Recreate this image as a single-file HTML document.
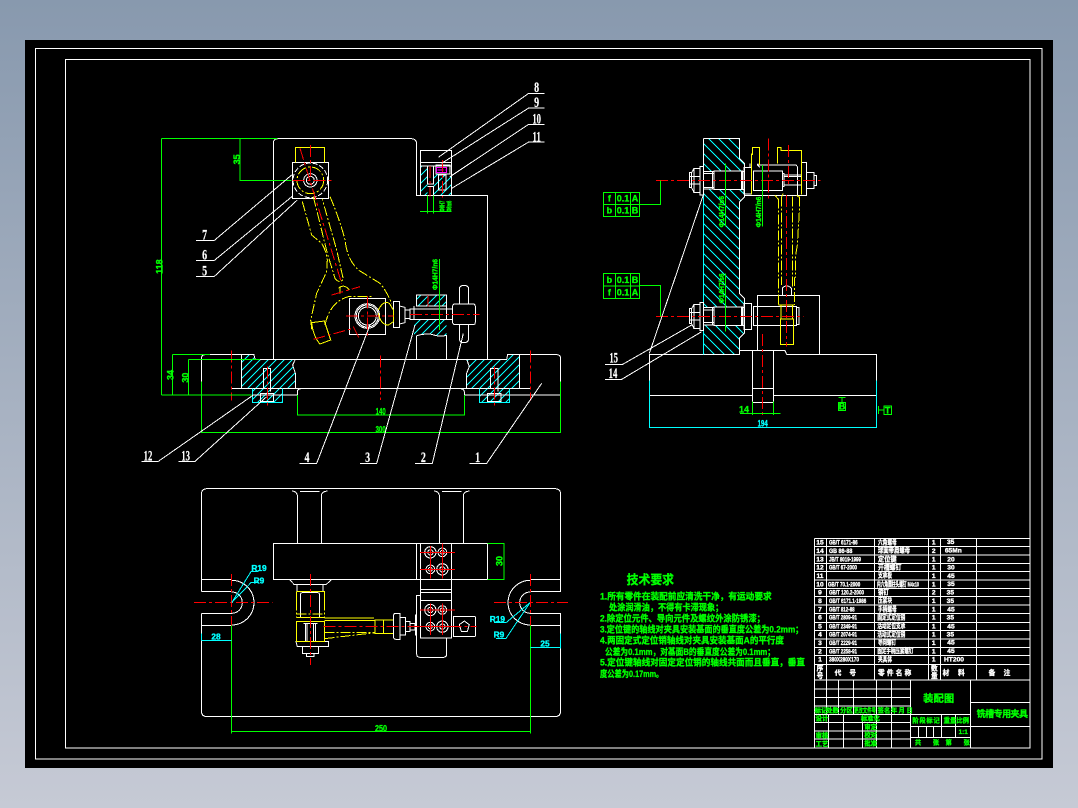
<!DOCTYPE html>
<html><head><meta charset="utf-8"><style>
html,body{margin:0;padding:0;width:1078px;height:808px;overflow:hidden;background:linear-gradient(180deg,#8899ae 0%,#c6cad5 100%)}
svg{position:absolute;left:0;top:0;display:block}
svg *{vector-effect:non-scaling-stroke}
.w{stroke:#fff;fill:none;stroke-width:1}
.g{stroke:#0f0;fill:none;stroke-width:1}
.c{stroke:#0ff;fill:none;stroke-width:1}
.r{stroke:#f00;fill:none;stroke-width:1;stroke-dasharray:12 3 3 3}
.r2{stroke:#f00;fill:none;stroke-width:1}
.y{stroke:#ff0;fill:none;stroke-width:1}
.yd{stroke:#ff0;fill:none;stroke-width:1;stroke-dasharray:10 2 2 2}
text{font-family:"Liberation Sans","Noto Sans CJK SC",sans-serif;font-weight:700;stroke-width:.35}
.tw{fill:#fff;stroke:#fff}.tg{fill:#0f0;stroke:#0f0}.tc{fill:#0ff;stroke:#0ff}
.m{text-anchor:middle}
.l{font-family:"Liberation Serif",serif;font-size:44px;stroke-width:.2}
</style></head><body>
<svg width="1078" height="808" viewBox="0 0 1078 808" shape-rendering="crispEdges">
<defs>
<pattern id="hf" patternUnits="userSpaceOnUse" width="24" height="24"><path d="M-6 6L6 -6M0 24L24 0M18 30L30 18" stroke="#0ff" stroke-width="2.4" fill="none"/></pattern>
<pattern id="hb" patternUnits="userSpaceOnUse" width="30" height="30"><path d="M-6 24L6 36M0 0L30 30M24 -6L36 6" stroke="#0ff" stroke-width="2.6" fill="none"/></pattern>
</defs>
<rect x="25" y="40" width="1028" height="728" fill="#000"/>
<rect x="35.5" y="48.5" width="1006.5" height="710.5" class="w"/>
<rect x="65.5" y="59.5" width="964.5" height="688.5" class="w"/>

<!-- FRONT VIEW -->
<g transform="translate(140 80) scale(.33333)">
<path d="M304 824H342V838H304ZM304 838H466L458 855L466 880V925H304ZM338 925H428V968H338ZM1103 824H1138V838H1103ZM980 838H1138V925H980V880L988 860ZM1018 925H1108V968H1018Z" fill="url(#hf)"/>
<path d="M829 645H920V678H829ZM822 718H920V768Q898 772 875 763Q850 760 829 768H822Z" fill="url(#hf)"/>
<path d="M842 258H862V346H842ZM880 280H935V346H880Z" fill="url(#hf)"/>
<rect x="862" y="258" width="18" height="88" fill="#000"/>
<path class="w" d="M400 838V190Q400 176 414 176H812Q830 176 830 192V346H1043V838"/>
<path class="w" d="M184 905V836Q184 824 196 824H342L345 838H1100L1103 824H1250Q1262 824 1262 836V905"/>
<path class="w" d="M184 945H335M428 945H472M973 945H1018M1108 945H1262M275 925H1170"/>
<path class="w" d="M472 945V936Q472 927 482 927M973 945V936Q973 927 963 927M466 838L458 855L466 880V925M980 838L988 860L980 880V925M304 824V925M1138 824V925"/>
<path class="c" d="M338 925V968H428V925M1018 925V968H1108V925"/>
<path class="w" d="M370 925V865H392V935M362 940H400V965H362ZM1052 925V865H1074V935M1043 940H1083V965H1043ZM338 945H428M1018 945H1108"/>
<!-- upper clamp -->
<path class="w" d="M841 346V212H935V346M841 247H935M841 258H935M888 255H930V282H888ZM896 285H918V330H896ZM862 258V312H880V258M862 320H880V346M896 330H918"/>
<rect x="890" y="262" width="30" height="16" stroke="#f0f" fill="none"/>
<path d="M892 270H918" stroke="#f0f" stroke-dasharray="6 2"/>
<!-- squares and circles -->
<rect x="457" y="247" width="109" height="108" class="w"/>
<circle cx="511" cy="301" r="12" class="w"/><circle cx="511" cy="301" r="20" class="w"/><circle cx="511" cy="301" r="52" class="w" stroke-dasharray="5 2"/>
<rect x="628" y="655" width="109" height="109" class="w"/>
<circle cx="682" cy="708" r="27" class="w"/><circle cx="682" cy="708" r="33" class="w"/><circle cx="682" cy="708" r="37" class="w"/>
<!-- handle side -->
<path class="w" d="M760 665H778V742H760ZM778 678L795 682V728L778 732M795 690H810V716H795M810 687H938V718H810ZM938 678Q938 672 945 672H1000Q1006 672 1006 680V726Q1006 734 1000 734H945Q938 734 938 726ZM958 672V628Q958 616 972 616Q986 616 986 628V672M958 734V775Q958 788 972 788Q986 788 986 775V734"/>
<path class="w" d="M829 838V768Q850 760 875 763Q898 772 920 766V838M829 645H920V678H829ZM822 678V718H832M920 678V718"/>
<!-- link yellow -->
<path class="yd" d="M487 365L515 465L545 490Q558 510 562 540L560 575L530 640L512 720L516 752M570 350Q600 420 615 480Q622 540 655 570L720 610Q738 630 755 670"/>
<path class="yd" d="M520 350L562 520L585 595Q598 612 610 598L590 510L547 358"/>
<path class="y" d="M515 728L553 723L572 780L540 792Q520 770 515 728ZM466 247V203H553V247M595 625Q612 610 628 630M600 620V640M715 690Q730 660 748 670L760 690V725L745 735Q722 735 715 700"/>
<circle cx="511" cy="301" r="40" class="yd"/>
<path class="yd" d="M555 735Q570 665 625 650H700"/>
<!-- centerlines -->
<path class="r" d="M275 812V962M722 826V960M1171 812V962M382 860V980M1063 860V980M458 301H578M511 195V290M480 205L605 610M618 708H760M682 650V772M810 703H1018M870 258V350M907 240V352M864 645V680M520 778L640 745M575 645L660 620M640 740L660 780"/>
<!-- green dims -->
<path class="g" d="M65 176H412M65 176V945M65 945H335M300 176V301H455M98 823H210M98 823V945M145 838H360M145 838V945M472 945V1005H973V945M184 905V1058H1262V905M840 395H935M862 346V400M880 346V400M898 537V750"/>
<text class="tg m" font-size="27" transform="translate(300 238) rotate(-90)">35</text>
<text class="tg m" font-size="27" transform="translate(68 560) rotate(-90)">118</text>
<text class="tg m" font-size="27" transform="translate(100 885) rotate(-90)">34</text>
<text class="tg m" font-size="27" transform="translate(145 893) rotate(-90)">30</text>
<text class="tg m" font-size="27" x="722" y="1004" textLength="30" lengthAdjust="spacingAndGlyphs">140</text>
<text class="tg m" font-size="27" x="722" y="1057" textLength="30" lengthAdjust="spacingAndGlyphs">300</text>
<text class="tg" font-size="21" transform="translate(914 395) rotate(-90)" textLength="33" lengthAdjust="spacingAndGlyphs">Φ8H7</text>
<text class="tg" font-size="21" transform="translate(935 395) rotate(-90)" textLength="33" lengthAdjust="spacingAndGlyphs">Φ8m6</text>
<text class="tg" font-size="22" transform="translate(893 630) rotate(-90)" textLength="93" lengthAdjust="spacingAndGlyphs">Φ14H7/n6</text>
<!-- leaders -->
<path class="w" d="M1214 40H1166L895 232M1214 84H1166L905 250M1214 133H1166L930 290M1214 186H1166L935 325M168 482H222L455 285M168 542H222L458 348M168 590H222L472 360M5 1144H55L340 945M115 1144H165L380 950M478 1150H530L690 735M660 1150H710L825 735M825 1150H877L970 760M988 1150H1040L1205 910"/>
<text class="tw l m" x="1190" y="36" textLength="15" lengthAdjust="spacingAndGlyphs">8</text><text class="tw l m" x="1190" y="81" textLength="15" lengthAdjust="spacingAndGlyphs">9</text><text class="tw l m" x="1190" y="130" textLength="26" lengthAdjust="spacingAndGlyphs">10</text><text class="tw l m" x="1190" y="184" textLength="26" lengthAdjust="spacingAndGlyphs">11</text>
<text class="tw l m" x="194" y="478" textLength="15" lengthAdjust="spacingAndGlyphs">7</text><text class="tw l m" x="194" y="538" textLength="15" lengthAdjust="spacingAndGlyphs">6</text><text class="tw l m" x="194" y="586" textLength="15" lengthAdjust="spacingAndGlyphs">5</text>
<text class="tw l m" x="24" y="1141" textLength="26" lengthAdjust="spacingAndGlyphs">12</text><text class="tw l m" x="137" y="1141" textLength="26" lengthAdjust="spacingAndGlyphs">13</text><text class="tw l m" x="501" y="1146" textLength="15" lengthAdjust="spacingAndGlyphs">4</text><text class="tw l m" x="683" y="1146" textLength="15" lengthAdjust="spacingAndGlyphs">3</text><text class="tw l m" x="850" y="1146" textLength="15" lengthAdjust="spacingAndGlyphs">2</text><text class="tw l m" x="1013" y="1146" textLength="15" lengthAdjust="spacingAndGlyphs">1</text>
</g>

<!-- RIGHT VIEW -->
<g transform="translate(590 120) scale(.33333)">
<path d="M340 55H448V115L463 130V232L448 247V520L463 535V640L448 655V703H340Z" fill="url(#hb)"/>
<rect x="340" y="153" width="122" height="56" fill="#000"/><rect x="340" y="561" width="122" height="56" fill="#000"/>
<path class="w" d="M340 55H448V115L463 130V232L448 247V520L463 535V640L448 655V703H335M340 55V225"/>
<path class="c" d="M340 225V703"/>
<path class="w" d="M178 782V703H335M448 692H585L590 703H860V782M178 826H487M550 826H860M487 692V880M550 692V880M487 805H550M487 847H550M502 692V526H689V703"/>
<path class="c" d="M178 782V922H860V782"/>
<!-- upper bolt -->
<path class="w" d="M330 140H340V225H330ZM330 145H312L305 158H298V203H305L312 218H330M305 158V203M312 145V218M298 170H330M298 192H330M340 155H372M340 207H372M340 160H372M340 202H372M372 153H458V209H372ZM368 153V209M454 155H462V208H454ZM462 142H485V222H462ZM490 153H578V212H490ZM578 160H582V200H578M582 165H635M582 195H635M582 170H635M462 226H650V127H635M502 135H618L622 140V226M480 130V142M505 130L502 135L510 142M650 158H672V205H650ZM672 167H680V197H672Z"/>
<!-- lower bolt -->
<path class="w" d="M330 547H340V632H330ZM330 553H312L305 566H298V611H305L312 626H330M305 566V611M312 553V626M298 578H330M298 600H330M340 563H372M340 615H372M340 570H372M340 608H372M372 561H458V617H372ZM368 561V617M454 563H462V616H454ZM462 550H485V628H462ZM490 559H620V617H490ZM620 562H627V614H620ZM577 525V505Q590 490 604 505V525"/>
<!-- yellow -->
<path class="y" d="M485 100V224M487 105V83H509V135M562 130V83H573V92H634V224M565 555H612M573 555V597M607 555V597M571 597H611V674H571Z"/>
<path class="yd" d="M565 235V555M575 230V495M607 230V500M628 230V275L625 325L622 375L617 405V470L613 475V555M555 226L565 238"/>
<path class="yd" d="M580 220L575 230M620 226L628 232"/>
<!-- red -->
<path class="r" d="M198 181H692M198 589H640M535 55V240M595 75V195M589 225V680M517 642V885"/>
<!-- green -->
<path class="g" d="M40 217H149V290H40ZM40 253H211V181M76 217V290M122 217V290M40 460H149V536H40ZM40 498H149M76 460V536M122 460V536M149 497H211V590M406 130V320M406 460V635M517 135V320M450 880H572M487 845V885M550 845V885M745 832H767M756 832V848M745 848H767V872H745ZM865 858V882M865 870H882M882 858H905V884H882Z"/>
<g font-size="27">
<text class="tg m" x="58" y="245">f</text><text class="tg m" x="99" y="245">0.1</text><text class="tg m" x="135" y="245">A</text>
<text class="tg m" x="58" y="281">b</text><text class="tg m" x="99" y="281">0.1</text><text class="tg m" x="135" y="281">B</text>
<text class="tg m" x="58" y="489">b</text><text class="tg m" x="99" y="489">0.1</text><text class="tg m" x="135" y="489">B</text>
<text class="tg m" x="58" y="527">f</text><text class="tg m" x="99" y="527">0.1</text><text class="tg m" x="135" y="527">A</text>
<text class="tg m" x="756" y="868">B</text><text class="tg m" x="893" y="880">T</text>
<text class="tg m" x="462" y="878">14</text>
<text class="tc m" x="518" y="920" textLength="30" lengthAdjust="spacingAndGlyphs">194</text>
</g>
<text class="tg" font-size="22" transform="translate(402 322) rotate(-90)" textLength="94" lengthAdjust="spacingAndGlyphs">Φ14H7/s6</text>
<text class="tg" font-size="22" transform="translate(402 550) rotate(-90)" textLength="90" lengthAdjust="spacingAndGlyphs">Φ14H7/s6</text>
<text class="tg" font-size="22" transform="translate(513 322) rotate(-90)" textLength="92" lengthAdjust="spacingAndGlyphs">Φ14H7/n6</text>
<!-- leaders -->
<path class="w" d="M45 733H98L305 615M45 778H95L335 635M178 700L340 225"/>
<text class="tw l m" x="71" y="727" textLength="26" lengthAdjust="spacingAndGlyphs">15</text><text class="tw l m" x="69" y="774" textLength="26" lengthAdjust="spacingAndGlyphs">14</text>
</g>

<!-- PLAN VIEW -->
<g transform="translate(190 480) scale(.33333)">
<path class="w" d="M34 298V44Q34 26 52 26H1094Q1112 26 1112 44V334H1022M34 298H125M34 334H125M34 298V334M1112 298H1022M34 400H125M34 436H125M34 400V692Q34 710 52 710H1094Q1112 710 1112 692V400H1022M1112 436H1022"/>
<path class="w" d="M125 301A67 67 0 0 1 125 435M125 336A32 32 0 0 1 125 400M1021 301A67 67 0 0 0 1021 435M1021 336A32 32 0 0 0 1021 400"/>
<path class="w" d="M250 190H892V298H250ZM322 190V46Q320 34 306 33M394 190V46Q396 34 412 33M330 34H388M748 190V46Q746 34 732 33M820 190V46Q822 34 838 33M756 34H814"/>
<path class="w" d="M680 190V298M691 190V474H785V190M691 328H785M691 338H785M691 362H785M691 298V190"/>
<rect x="691" y="190" width="94" height="108" fill="#000" stroke="#fff"/>
<path class="w" d="M690 346H680V522Q680 532 690 532H760Q770 532 770 522V474M676 404V466"/>
<rect x="790" y="409" width="66" height="61" rx="3" class="w"/>
<path class="w" d="M823 423L838 434L832 454H814L808 434Z"/>
<g class="w">
<circle cx="721" cy="217" r="8"/><circle cx="721" cy="217" r="17"/>
<circle cx="757" cy="217" r="6"/><circle cx="757" cy="217" r="13"/>
<circle cx="721" cy="268" r="6"/><circle cx="721" cy="268" r="13"/>
<circle cx="757" cy="268" r="8"/><circle cx="757" cy="268" r="17"/>
<circle cx="721" cy="390" r="8"/><circle cx="721" cy="390" r="17"/>
<circle cx="757" cy="390" r="6"/><circle cx="757" cy="390" r="13"/>
<circle cx="721" cy="440" r="6"/><circle cx="721" cy="440" r="13"/>
<circle cx="757" cy="440" r="8"/><circle cx="757" cy="440" r="17"/>
</g>
<path class="w" d="M298 298L313 314H408L425 298M321 314V334M399 314V334M331 345Q331 338 338 338H382Q389 338 389 345V412M331 345V412M346 432V484M351 432V484M371 432V484M376 432V484M340 430H382M318 484H416V500H322ZM338 500V520H385V500M350 520V530H372V520"/>
<path class="y" d="M319 334H404V362M319 334V362M319 424H404V484H319ZM319 412H404M555 420H610V460H555ZM580 420V460M404 414H552M404 422H555"/>
<path class="yd" d="M319 362V412M404 362V412M319 402H404M404 458H555M404 476L555 458"/>
<path class="w" d="M611 406Q611 400 618 400H630V478H618Q611 478 611 472ZM630 412H647V465H630ZM647 425H660V455H647ZM660 430H675V450H660Z"/>
<path class="r" d="M12 368H248M912 368H1134M125 282V450M1021 282V460M361 282V555M400 439H860"/>
<path class="r2" d="M690 217H795M721 198V296M757 190V296M690 268H795M690 390H795M721 370V465M757 370V465M690 440H795"/>
<path class="g" d="M892 190H942V298H892M124 436V760M1021 436V760M124 754H1021"/>
<path class="c" d="M34 481H124M34 460V482M1022 503H1112M1112 460V505M125 368L183 275H205M125 368L183 308H205M912 428H948L1020 368M918 475H948L1020 368"/>
<text class="tg m" font-size="27" x="573" y="754" textLength="36" lengthAdjust="spacingAndGlyphs">250</text>
<text class="tg m" font-size="27" transform="translate(938 243) rotate(-90)">30</text>
<g font-size="25">
<text class="tc m" x="78" y="479">28</text><text class="tc m" x="1065" y="500">25</text>
<text class="tc m" x="207" y="273">R19</text><text class="tc m" x="207" y="310">R9</text>
<text class="tc m" x="922" y="426">R19</text><text class="tc m" x="927" y="472">R9</text>
</g>
</g>

<!-- TECH TEXT -->
<g transform="translate(590 565) scale(.33333)" font-size="28">
<text class="tg" x="110" y="57" font-size="38" textLength="142" lengthAdjust="spacingAndGlyphs">技术要求</text>
<text class="tg" x="30" y="103" textLength="515" lengthAdjust="spacingAndGlyphs">1.所有零件在装配前应清洗干净，有运动要求</text>
<text class="tg" x="57" y="136" textLength="343" lengthAdjust="spacingAndGlyphs">处涂润滑油，不得有卡滞现象；</text>
<text class="tg" x="30" y="170" textLength="495" lengthAdjust="spacingAndGlyphs">2.除定位元件、导向元件及螺纹外涂防锈漆；</text>
<text class="tg" x="30" y="203" textLength="610" lengthAdjust="spacingAndGlyphs">3.定位键的轴线对夹具安装基面的垂直度公差为0.2mm；</text>
<text class="tg" x="30" y="236" textLength="552" lengthAdjust="spacingAndGlyphs">4.两固定式定位销轴线对夹具安装基面A的平行度</text>
<text class="tg" x="45" y="270" textLength="510" lengthAdjust="spacingAndGlyphs">公差为0.1mm，对基面B的垂直度公差为0.1mm；</text>
<text class="tg" x="30" y="302" textLength="615" lengthAdjust="spacingAndGlyphs">5.定位键轴线对固定定位销的轴线共面而且垂直，垂直</text>
<text class="tg" x="30" y="336" textLength="190" lengthAdjust="spacingAndGlyphs">度公差为0.17mm。</text>
</g>

<!-- TITLE BLOCK -->
<g transform="translate(810 535) scale(.33333)">
<path class="w" d="M13 10H660M13 34H660M13 60H660M13 85H660M13 110H660M13 135H660M13 160H660M13 185H660M13 210H660M13 235H660M13 262H660M13 286H660M13 312H660M13 337H660M13 362H660M13 388H660M13 435H660M13 10V639M50 10V435M193 10V435M355 10V435M391 10V435M499 10V435M660 10V639"/>
<path class="w" d="M13 462H302M13 488H302M13 513H302M13 538H302M13 562H302M13 588H302M13 612H302M50 435V538M85 435V538M130 435V538M200 435V639M245 435V639M56 538V639M100 538V639M158 538V639M302 435V639M481 435V639M481 502H660M481 574H660M302 538H481M302 574H481M302 607H481M325 574V607M349 574V607M371 574V607M394 538V607M436 538V607"/>
<g font-size="20">
<text class="tw m" x="30" y="29">15</text><text class="tw" x="57" y="29" textLength="86" lengthAdjust="spacingAndGlyphs">GB/T 6171-86</text><text class="tw" x="204" y="28" textLength="56" lengthAdjust="spacingAndGlyphs">六角螺母</text><text class="tw m" x="371" y="29">1</text><text class="tw m" x="422" y="27">35</text>
<text class="tw m" x="30" y="54">14</text><text class="tw" x="57" y="54" textLength="70" lengthAdjust="spacingAndGlyphs">GB 86-88</text><text class="tw" x="204" y="52" textLength="96" lengthAdjust="spacingAndGlyphs">球面带肩螺母</text><text class="tw m" x="371" y="54">2</text><text class="tw m" x="430" y="53">65Mn</text>
<text class="tw m" x="30" y="79">13</text><text class="tw" x="57" y="79" textLength="96" lengthAdjust="spacingAndGlyphs">JB/T 8019-1999</text><text class="tw" x="204" y="79" textLength="56" lengthAdjust="spacingAndGlyphs">定位键</text><text class="tw m" x="371" y="79">1</text><text class="tw m" x="423" y="80">20</text>
<text class="tw m" x="30" y="104">12</text><text class="tw" x="57" y="104" textLength="84" lengthAdjust="spacingAndGlyphs">GB/T 67-2000</text><text class="tw" x="204" y="104" textLength="70" lengthAdjust="spacingAndGlyphs">开槽螺钉</text><text class="tw m" x="371" y="104">1</text><text class="tw m" x="423" y="104">30</text>
<text class="tw m" x="30" y="129">11</text><text class="tw" x="204" y="127" textLength="42" lengthAdjust="spacingAndGlyphs">支承板</text><text class="tw m" x="371" y="129">1</text><text class="tw m" x="423" y="129">45</text>
<text class="tw m" x="30" y="155">10</text><text class="tw" x="54" y="155" textLength="97" lengthAdjust="spacingAndGlyphs">GB/T 70.1-2000</text><text class="tw" x="201" y="155" textLength="126" lengthAdjust="spacingAndGlyphs">内六角圆柱头螺钉 M4x10</text><text class="tw m" x="371" y="155">1</text><text class="tw m" x="423" y="153">35</text>
<text class="tw m" x="30" y="179">9</text><text class="tw" x="57" y="179" textLength="105" lengthAdjust="spacingAndGlyphs">GB/T 120.2-2000</text><text class="tw" x="204" y="178" textLength="32" lengthAdjust="spacingAndGlyphs">销钉</text><text class="tw m" x="371" y="179">2</text><text class="tw m" x="421" y="179">35</text>
<text class="tw m" x="30" y="204">8</text><text class="tw" x="57" y="204" textLength="112" lengthAdjust="spacingAndGlyphs">GB/T 6171.1-1986</text><text class="tw" x="204" y="203" textLength="42" lengthAdjust="spacingAndGlyphs">压紧块</text><text class="tw m" x="371" y="204">1</text><text class="tw m" x="421" y="204">35</text>
<text class="tw m" x="30" y="229">7</text><text class="tw" x="57" y="229" textLength="77" lengthAdjust="spacingAndGlyphs">GB/T 812-88</text><text class="tw" x="204" y="229" textLength="56" lengthAdjust="spacingAndGlyphs">手柄螺母</text><text class="tw m" x="371" y="229">1</text><text class="tw m" x="423" y="229">45</text>
<text class="tw m" x="30" y="254">6</text><text class="tw" x="57" y="254" textLength="84" lengthAdjust="spacingAndGlyphs">GB/T 2809-91</text><text class="tw" x="202" y="253" textLength="84" lengthAdjust="spacingAndGlyphs">固定式定位销</text><text class="tw m" x="371" y="254">1</text><text class="tw m" x="421" y="254">35</text>
<text class="tw m" x="30" y="280">5</text><text class="tw" x="57" y="280" textLength="84" lengthAdjust="spacingAndGlyphs">GB/T 2349-91</text><text class="tw" x="202" y="279" textLength="84" lengthAdjust="spacingAndGlyphs">活动定位支承</text><text class="tw m" x="371" y="280">1</text><text class="tw m" x="423" y="280">45</text>
<text class="tw m" x="30" y="305">4</text><text class="tw" x="57" y="305" textLength="84" lengthAdjust="spacingAndGlyphs">GB/T 2074-91</text><text class="tw" x="202" y="304" textLength="84" lengthAdjust="spacingAndGlyphs">活动式定位销</text><text class="tw m" x="371" y="305">1</text><text class="tw m" x="421" y="305">35</text>
<text class="tw m" x="30" y="330">3</text><text class="tw" x="57" y="330" textLength="84" lengthAdjust="spacingAndGlyphs">GB/T 2229-91</text><text class="tw" x="204" y="329" textLength="54" lengthAdjust="spacingAndGlyphs">导向螺钉</text><text class="tw m" x="371" y="330">1</text><text class="tw m" x="423" y="329">45</text>
<text class="tw m" x="30" y="355">2</text><text class="tw" x="57" y="355" textLength="84" lengthAdjust="spacingAndGlyphs">GB/T 2258-91</text><text class="tw" x="202" y="354" textLength="108" lengthAdjust="spacingAndGlyphs">固定手柄压紧螺钉</text><text class="tw m" x="371" y="355">1</text><text class="tw m" x="423" y="354">45</text>
<text class="tw m" x="30" y="380">1</text><text class="tw" x="57" y="380" textLength="90" lengthAdjust="spacingAndGlyphs">380X280X170</text><text class="tw" x="204" y="379" textLength="42" lengthAdjust="spacingAndGlyphs">夹具体</text><text class="tw m" x="371" y="380">1</text><text class="tw m" x="432" y="380">HT200</text>
<text class="tw m" x="30" y="407">序</text><text class="tw m" x="30" y="429">号</text>
<text class="tw m" x="84" y="420">代</text><text class="tw m" x="128" y="420">号</text>
<text class="tw" x="204" y="420" textLength="100" lengthAdjust="spacing">零件名称</text>
<text class="tw m" x="373" y="407">数</text><text class="tw m" x="373" y="429">量</text>
<text class="tw m" x="408" y="420">材</text><text class="tw m" x="454" y="420">料</text>
<text class="tw m" x="546" y="420">备</text><text class="tw m" x="591" y="420">注</text>
</g>
<g font-size="19">
<text class="tg m" x="33" y="532">标记</text><text class="tg m" x="68" y="532">处数</text><text class="tg m" x="109" y="532">分区</text>
<text class="tg m" x="165" y="532" textLength="66" lengthAdjust="spacingAndGlyphs">更改文件号</text><text class="tg m" x="222" y="532">签名</text>
<text class="tg m" x="252" y="532">年</text><text class="tg m" x="275" y="532">月</text><text class="tg m" x="299" y="532">日</text>
<text class="tg m" x="36" y="557">设计</text><text class="tg m" x="36" y="607">审核</text><text class="tg m" x="36" y="633">工艺</text>
<text class="tg m" x="181" y="557">标准化</text><text class="tg m" x="182" y="582">审定</text><text class="tg m" x="182" y="606">校对</text><text class="tg m" x="182" y="631">批准</text>
<text class="tg m" x="348" y="562" textLength="82" lengthAdjust="spacing">阶段标记</text><text class="tg m" x="420" y="562">重量</text><text class="tg m" x="458" y="562">比例</text>
<text class="tg" x="446" y="597">1:1</text>
<text class="tg m" x="324" y="628">共</text><text class="tg m" x="378" y="628">张</text><text class="tg m" x="416" y="628">第</text><text class="tg m" x="470" y="628">张</text>
</g>
<text class="tg m" x="386" y="501" font-size="31">装配图</text>
<text class="tg m" x="577" y="546" font-size="27" textLength="154" lengthAdjust="spacing">铣槽专用夹具</text>
</g>
</svg>
</body></html>
